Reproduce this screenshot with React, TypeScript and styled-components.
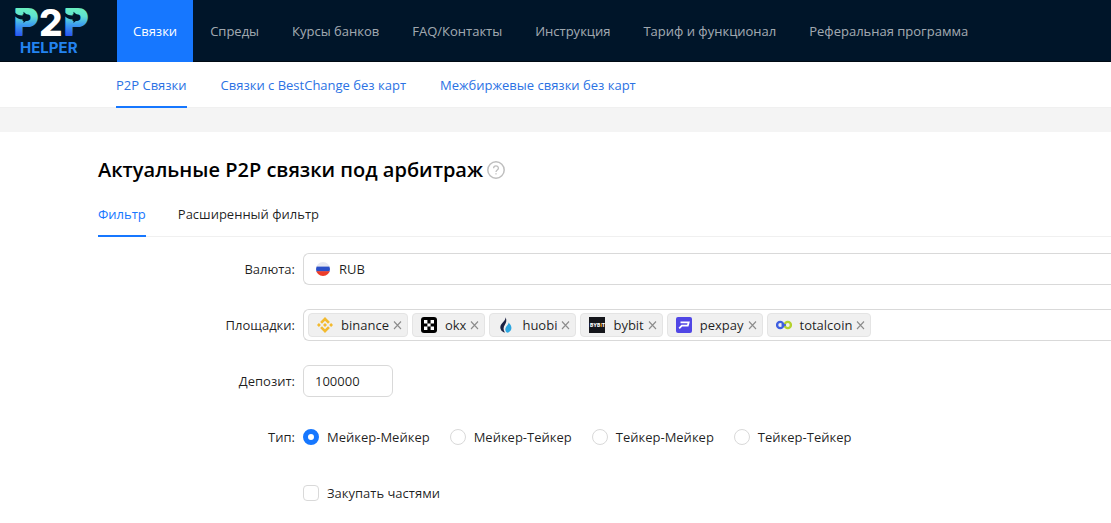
import React, { useState } from "react";
import styled, { createGlobalStyle } from "styled-components";

const GlobalStyle = createGlobalStyle`
  *, *::before, *::after { box-sizing: border-box; }
  body {
    margin: 0;
    background: #fff;
    color: rgba(0, 0, 0, 0.88);
    font-family: "Segoe UI", "Open Sans", "Noto Sans", sans-serif;
    font-size: 13px;
    line-height: 22px;
    overflow-x: hidden;
  }
  button, input, select { font: inherit; color: inherit; }
`;

const Header = styled.header`
  display: flex;
  height: 62px;
  background: #001529;
  border-bottom: 1px solid #000a14;
`;

const LogoLink = styled.a`
  flex: none;
  width: 117px;
  height: 61px;
  svg { display: block; }
`;

const MainNav = styled.nav`
  display: flex;
  gap: 1px;
`;

const NavItem = styled.a<{ $active?: boolean }>`
  display: flex;
  align-items: center;
  padding: 0 16px;
  height: 62px;
  white-space: nowrap;
  text-decoration: none;
  color: ${(p) => (p.$active ? "#fff" : "rgba(255, 255, 255, 0.65)")};
  background: ${(p) => (p.$active ? "#1677ff" : "transparent")};
`;

const SubNav = styled.nav`
  display: flex;
  gap: 34px;
  height: 46px;
  padding-left: 116px;
  border-bottom: 1px solid #f0f0f0;
`;

const SubNavItem = styled.a<{ $active?: boolean }>`
  height: 46px;
  padding: 12px 0 10px;
  white-space: nowrap;
  text-decoration: none;
  color: #2b72e4;
  border-bottom: 2px solid ${(p) => (p.$active ? "#1677ff" : "transparent")};
`;

const Divider = styled.div`
  height: 24px;
  background: #f4f4f4;
`;

const Page = styled.main`
  padding: 24px 0 14px 98px;
`;

const TitleRow = styled.div`
  display: flex;
  align-items: center;
  gap: 4px;
  height: 28px;
`;

const Title = styled.h1`
  margin: 0;
  font-size: 20px;
  line-height: 28px;
  font-weight: 600;
  color: #000;
  white-space: nowrap;
`;

const HelpButton = styled.button`
  display: flex;
  padding: 0;
  border: 0;
  background: none;
`;

const Tabs = styled.div`
  display: flex;
  gap: 32px;
  margin-top: 8px;
  border-bottom: 1px solid #f0f0f0;
`;

const Tab = styled.button<{ $active?: boolean }>`
  height: 45px;
  margin-bottom: -1px;
  padding: 0;
  border: 0;
  border-bottom: 2px solid ${(p) => (p.$active ? "#1677ff" : "transparent")};
  background: none;
  color: ${(p) => (p.$active ? "#1677ff" : "inherit")};
  white-space: nowrap;
`;

const Form = styled.form`
  display: grid;
  gap: 24px;
  margin-top: 16px;
`;

const Row = styled.div`
  display: grid;
  grid-template-columns: 197px minmax(0, 1fr);
  column-gap: 8px;
  align-items: center;
  height: 32px;
`;

const Label = styled.label`
  text-align: right;
`;

const Field = styled.div`
  display: flex;
  align-items: center;
  height: 32px;
  border: 1px solid #d9d9d9;
  border-right: 0;
  border-radius: 6px 0 0 6px;
`;

const CurrencyField = styled(Field)`
  gap: 9px;
  padding-left: 12px;
`;

const CurrencySelect = styled.select`
  flex: 1;
  appearance: none;
  border: 0;
  padding: 0;
  background: none;
  outline: none;
`;

const TagList = styled.ul`
  display: flex;
  gap: 4px;
  margin: 0;
  padding: 0 4px;
  list-style: none;
`;

const Tag = styled.li`
  display: flex;
  align-items: center;
  height: 24px;
  padding: 0 5px 0 8px;
  border: 1px solid #e4e4e4;
  border-radius: 4px;
  background: #f0f0f0;
  svg { display: block; flex: none; }
`;

const TagName = styled.span`
  margin: 0 4px 0 8px;
`;

const RemoveButton = styled.button`
  display: flex;
  padding: 0;
  border: 0;
  background: none;
`;

const DepositInput = styled.input`
  width: 90px;
  height: 32px;
  padding: 0 11px;
  border: 1px solid #d9d9d9;
  border-radius: 6px;
  outline: none;
`;

const Choices = styled.div`
  display: flex;
  gap: 20px;
`;

const Choice = styled.label`
  display: flex;
  align-items: center;
  gap: 8px;
  white-space: nowrap;
`;

const Radio = styled.input`
  appearance: none;
  width: 16px;
  height: 16px;
  margin: 0;
  border: 1px solid #d9d9d9;
  border-radius: 50%;
  background: #fff;
  &:checked { border: 5px solid #1677ff; }
`;

const Checkbox = styled.input`
  appearance: none;
  width: 16px;
  height: 16px;
  margin: 0;
  border: 1px solid #d9d9d9;
  border-radius: 4px;
  background: #fff;
  &:checked { background: #1677ff; border-color: #1677ff; }
`;

const Logo = () => (
  <svg width="100" height="61" viewBox="0 0 100 61" role="img" aria-label="P2P Helper">
    <defs>
      <linearGradient id="letter" gradientUnits="userSpaceOnUse" x1="0" y1="36" x2="0" y2="8">
        <stop offset="0" stopColor="#2a55f0" />
        <stop offset="0.4" stopColor="#3d9df0" />
        <stop offset="0.7" stopColor="#5fe0d0" />
        <stop offset="1" stopColor="#6af0c0" />
      </linearGradient>
    </defs>
    <g
      fontFamily="Liberation Sans, sans-serif"
      fontWeight="700"
      fontSize="36"
      fill="url(#letter)"
      stroke="url(#letter)"
      strokeWidth="2"
      strokeLinejoin="round"
    >
      <text x="14" y="35">P</text>
      <text x="64" y="35">P</text>
    </g>
    <text x="39" y="36" fontFamily="Inter, sans-serif" fontWeight="800" fontSize="37" fill="#fff">2</text>
    <g fill="#001529">
      <path d="M14 11.500C17 15 20 15.800 23.500 15.500V11.800L30 17.500L23.500 23V19.500C20 19.800 17 18.500 14 15.500Z" />
      <path d="M64 11.500C67 15 70 15.800 73.500 15.500V11.800L80 17.500L73.500 23V19.500C70 19.800 67 18.500 64 15.500Z" />
    </g>
    <text x="20" y="53" fontFamily="Inter, sans-serif" fontWeight="700" fontSize="15" fill="#2383f0">HELPER</text>
  </svg>
);

const HelpIcon = () => (
  <svg width="18" height="18" viewBox="0 0 18 18" fill="none" stroke="#bfbfbf" aria-hidden="true">
    <circle cx="9" cy="9" r="8.200" strokeWidth="1.500" />
    <path d="M6.600 7.200C6.600 4.200 11.400 4.200 11.400 7.200C11.400 9 9 8.900 9 10.900" strokeWidth="1.300" />
    <circle cx="9" cy="12.900" r="0.300" strokeWidth="1" />
  </svg>
);

const FlagIcon = () => (
  <svg width="14" height="14" viewBox="0 0 14 14" aria-hidden="true">
    <clipPath id="round"><circle cx="7" cy="7" r="7" /></clipPath>
    <g clipPath="url(#round)">
      <rect width="14" height="5" fill="#e6e8f2" />
      <rect y="4.600" width="14" height="5" fill="#2b50c8" />
      <rect y="9.200" width="14" height="5" fill="#ec3d2a" />
    </g>
  </svg>
);

const CloseIcon = () => (
  <svg width="9" height="10" viewBox="0 0 9 10" stroke="#8c8c8c" strokeWidth="1.100" aria-hidden="true">
    <path d="M1 1.500L8 9M8 1.500L1 9" />
  </svg>
);

const icons: Record<string, React.ReactNode> = {
  binance: (
    <g fill="#f3ba2f">
      <path d="M8 0L12.900 4.900L11 6.800L8 3.800L5 6.800L3.100 4.900Z" />
      <path d="M8 16L12.900 11.100L11 9.200L8 12.200L5 9.200L3.100 11.100Z" />
      <path d="M8 6L10 8L8 10L6 8Z" />
      <path d="M1.900 6.100L3.800 8L1.900 9.900L0 8Z" />
      <path d="M14.100 6.100L16 8L14.100 9.900L12.200 8Z" />
    </g>
  ),
  okx: (
    <>
      <rect width="16" height="16" rx="3" fill="#000" />
      <path fill="#fff" d="M3 3h3.400v3.400H3zM9.600 3H13v3.400H9.600zM6.400 6.400h3.200v3.200H6.400zM3 9.600h3.400V13H3zM9.600 9.600H13V13H9.600z" />
    </>
  ),
  huobi: (
    <>
      <path fill="#1b2143" d="M7.600 0.300C9 3.500 8.200 5.600 7 7.400C5.200 10 5 13 7 15.600C3.300 14.600 1.800 11.700 2.500 8.900C3.200 6.300 7.400 4.300 7.600 0.300Z" />
      <path fill="#2ca6e0" d="M10.600 5.400C10.600 8 7.200 9.400 7.300 12.500C7.400 14.100 8 15.300 9.400 15.800C12 15.100 13.700 12.900 13.400 10.400C13.200 8.400 12 7 10.600 5.400Z" />
    </>
  ),
  bybit: (
    <>
      <rect width="16" height="16" fill="#15161b" />
      <text x="1" y="10" fontFamily="Inter, sans-serif" fontWeight="800" fontSize="5" fill="#fff">
        BYB<tspan fill="#f7a600">I</tspan>T
      </text>
    </>
  ),
  pexpay: (
    <>
      <rect width="16" height="16" rx="2" fill="#5046e5" />
      <path fill="none" stroke="#fff" strokeWidth="1.800" d="M4.500 5.300H12.700L11.800 8.700H5.800L3.200 11.300" />
    </>
  ),
  totalcoin: (
    <g fill="none" strokeWidth="2.400">
      <circle cx="11.800" cy="8" r="3.100" stroke="#b4d22e" />
      <circle cx="4.200" cy="8" r="3.100" stroke="#3f5fe0" />
      <path d="M5.500 8H10" stroke="#3f5fe0" strokeWidth="1.600" />
    </g>
  ),
};

const navItems = ["Связки", "Спреды", "Курсы банков", "FAQ/Контакты", "Инструкция", "Тариф и функционал", "Реферальная программа"];
const subNavItems = ["P2P Связки", "Связки с BestChange без карт", "Межбиржевые связки без карт"];
const dealTypes = ["Мейкер-Мейкер", "Мейкер-Тейкер", "Тейкер-Мейкер", "Тейкер-Тейкер"];

export default function App() {
  const [platforms, setPlatforms] = useState(Object.keys(icons));
  const [tab, setTab] = useState(0);

  return (
    <>
      <GlobalStyle />
      <Header>
        <LogoLink href="#"><Logo /></LogoLink>
        <MainNav>
          {navItems.map((item, i) => (
            <NavItem key={item} href="#" $active={i === 0}>{item}</NavItem>
          ))}
        </MainNav>
      </Header>
      <SubNav>
        {subNavItems.map((item, i) => (
          <SubNavItem key={item} href="#" $active={i === 0}>{item}</SubNavItem>
        ))}
      </SubNav>
      <Divider />
      <Page>
        <TitleRow>
          <Title>Актуальные P2P связки под арбитраж</Title>
          <HelpButton type="button" aria-label="Справка"><HelpIcon /></HelpButton>
        </TitleRow>
        <Tabs role="tablist">
          {["Фильтр", "Расширенный фильтр"].map((name, i) => (
            <Tab key={name} type="button" role="tab" aria-selected={tab === i} $active={tab === i} onClick={() => setTab(i)}>
              {name}
            </Tab>
          ))}
        </Tabs>
        <Form>
          <Row>
            <Label htmlFor="currency">Валюта:</Label>
            <CurrencyField>
              <FlagIcon />
              <CurrencySelect id="currency"><option>RUB</option></CurrencySelect>
            </CurrencyField>
          </Row>
          <Row>
            <Label as="span" id="platforms">Площадки:</Label>
            <Field>
              <TagList aria-labelledby="platforms">
                {platforms.map((name) => (
                  <Tag key={name}>
                    <svg width="16" height="16" viewBox="0 0 16 16" aria-hidden="true">{icons[name]}</svg>
                    <TagName>{name}</TagName>
                    <RemoveButton
                      type="button"
                      aria-label={`Удалить ${name}`}
                      onClick={() => setPlatforms(platforms.filter((p) => p !== name))}
                    >
                      <CloseIcon />
                    </RemoveButton>
                  </Tag>
                ))}
              </TagList>
            </Field>
          </Row>
          <Row>
            <Label htmlFor="deposit">Депозит:</Label>
            <DepositInput id="deposit" defaultValue="100000" />
          </Row>
          <Row>
            <Label as="span" id="deal-type">Тип:</Label>
            <Choices role="radiogroup" aria-labelledby="deal-type">
              {dealTypes.map((name, i) => (
                <Choice key={name}>
                  <Radio type="radio" name="type" defaultChecked={i === 0} />
                  {name}
                </Choice>
              ))}
            </Choices>
          </Row>
          <Row>
            <span />
            <Choice>
              <Checkbox type="checkbox" />
              Закупать частями
            </Choice>
          </Row>
        </Form>
      </Page>
    </>
  );
}
